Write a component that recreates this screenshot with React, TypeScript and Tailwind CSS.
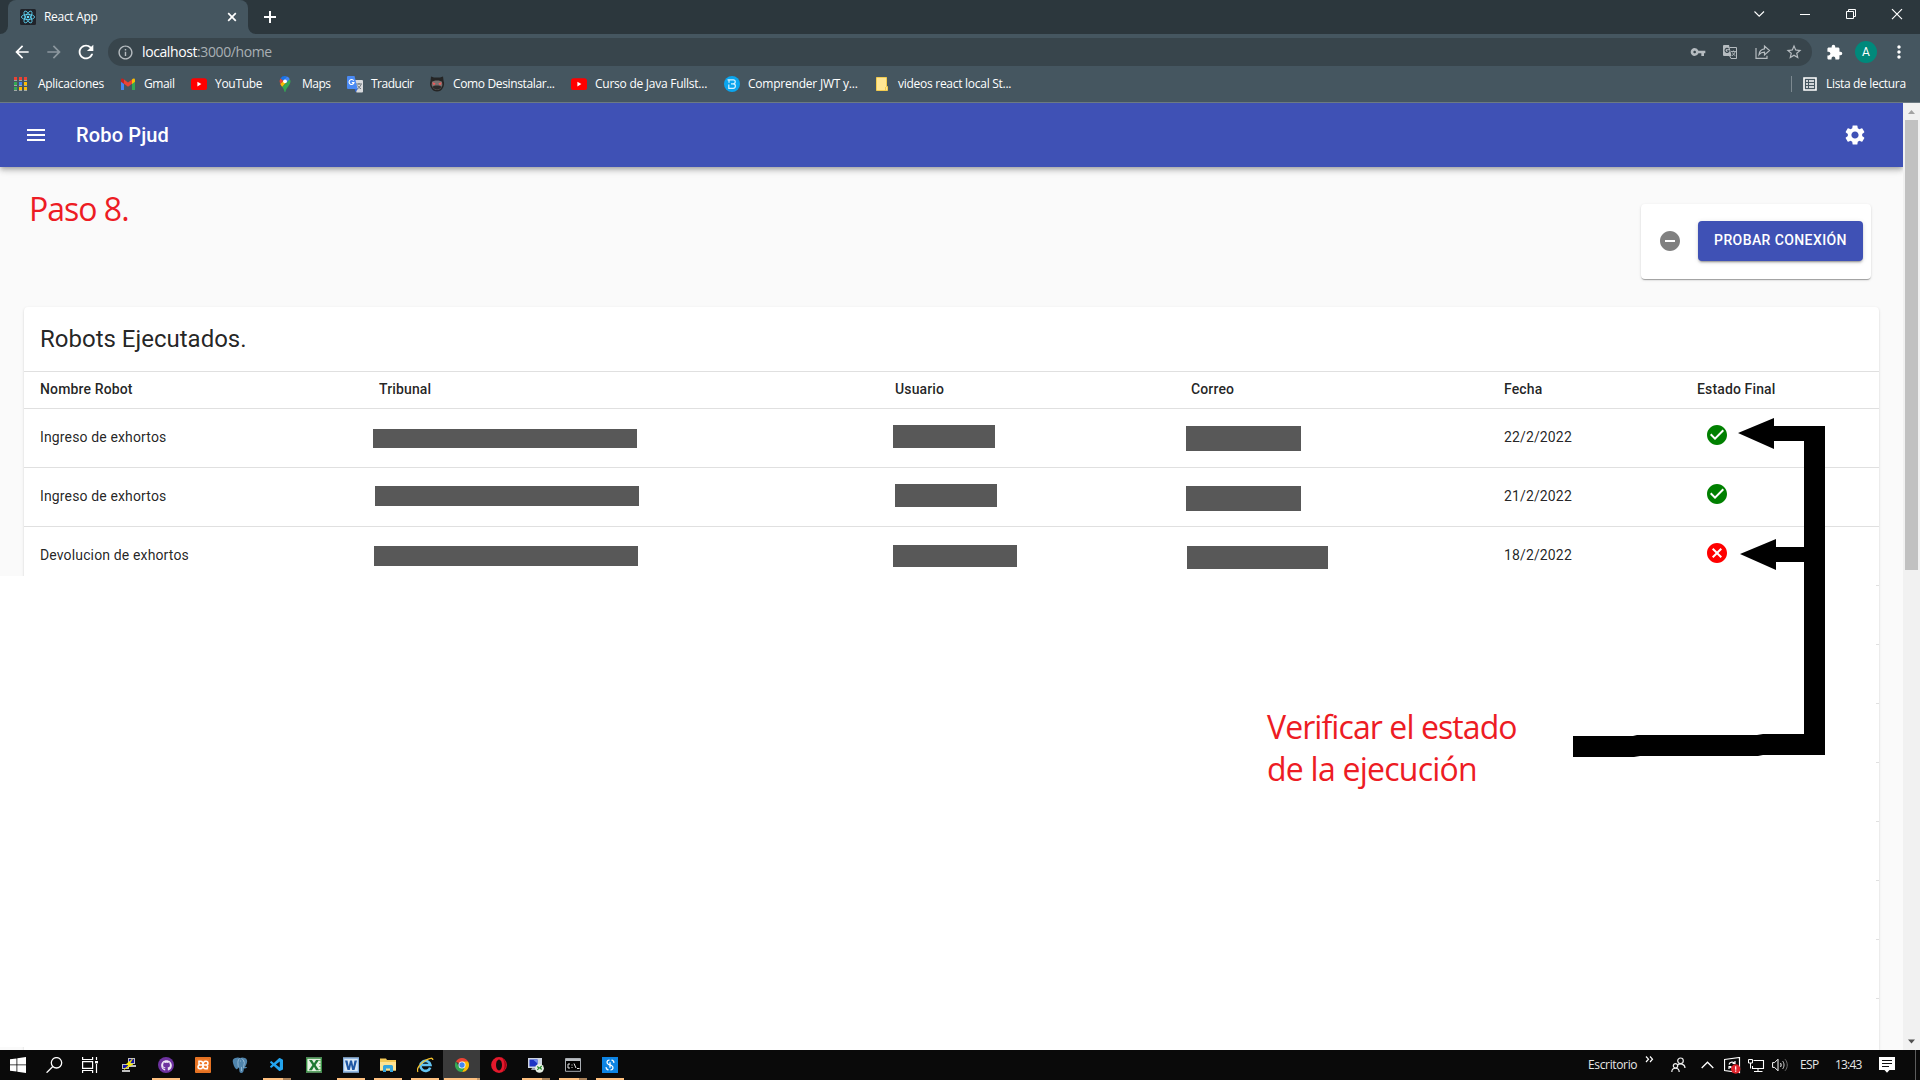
import React from "react";
import {
  MdMenu,
  MdSettings,
  MdCheckCircle,
  MdCancel,
  MdRemoveCircle,
  MdVpnKey,
  MdExtension,
  MdStarBorder,
  MdArrowBack,
  MdArrowForward,
  MdRefresh,
  MdMoreVert,
  MdInfoOutline,
} from "react-icons/md";
import { FaGithub } from "react-icons/fa";
import { VscVscode } from "react-icons/vsc";

/* ---------- bookmark icons ---------- */

const AppsIcon = () => (
  <svg width="16" height="16" viewBox="0 0 16 16">
    {[
      ["#ea4335", "#ea4335", "#ea4335"],
      ["#34a853", "#4285f4", "#fbbc04"],
      ["#34a853", "#fbbc04", "#fbbc04"],
    ].map((row, r) =>
      row.map((c, i) => <rect key={`${r}${i}`} x={i * 5} y={1 + r * 5} width="3" height="3" fill={c} />)
    )}
    <path d="M0 4.500h13M0 9.500h13M0 14.500h13" stroke="#a3aaa6" strokeWidth="1" strokeDasharray="3 2" />
  </svg>
);

const GmailIcon = () => (
  <svg width="16" height="16" viewBox="0 0 16 16">
    <path d="M1 4v10h3V7z" fill="#4285f4" />
    <path d="M12 7v7h3V4z" fill="#34a853" />
    <path d="M12 3.6V8l3-2.3V4c0-1.6-1.7-2-3-.4z" fill="#fbbc04" />
    <path d="M4 3.6v4.2l4 3 4-3V3.6l-4 3z" fill="#ea4335" />
    <path d="M1 4v1.7L4 8V3.6C2.7 2 1 2.4 1 4z" fill="#c5221f" />
  </svg>
);

const YouTubeIcon = () => (
  <svg width="16" height="16" viewBox="0 0 16 16">
    <rect x="0" y="2.2" width="16" height="11.8" rx="2.6" fill="#f00" />
    <path d="M6.4 5.8v4.6l4-2.3z" fill="#fff" />
  </svg>
);

const MapsIcon = () => (
  <svg width="16" height="16" viewBox="0 0 16 16">
    <g transform="translate(-1 0)">
      <path d="M8 0a5.5 5.5 0 0 0-4.6 2.4L6.5 5 10 .4A5 5 0 0 0 8 0z" fill="#1a73e8" />
      <path d="M3.4 2.4A5.4 5.4 0 0 0 3.2 8l3.2-3.1z" fill="#ea4335" />
      <path d="M10 .4 6.4 4.8l3.4 2.4 3-4A5 5 0 0 0 10 .4z" fill="#4285f4" />
      <path d="M3.2 8c.6 1.2 1.3 1.9 2 2.9l4.6-5.2L6.4 4.9z" fill="#fbbc04" />
      <path d="M12.8 3.2 5.2 10.9C6.6 12.8 7.200 14 7.500 15.400c.2.8.8.8 1 0 .9-3.600 4.800-6.200 5-9.800 0-.9-.3-1.700-.7-2.400z" fill="#34a853" />
      <circle cx="8" cy="5.3" r="1.900" fill="#fff" />
    </g>
  </svg>
);

const TranslateIcon = () => (
  <svg width="16" height="17" viewBox="0 0 16 17">
    <path d="M6 4h9a1 1 0 0 1 1 1v10.500a1 1 0 0 1-1 1H9.500z" fill="#d8dadd" />
    <path d="M9 8h6M12 7v1.500M14 8.500c-.7 2-2.200 3.500-4 4.500M10.500 9.500c.8 1.500 2 2.600 3.500 3.400" stroke="#6b747b" fill="none" />
    <path d="M1 0h6.500l3.200 13H1a1 1 0 0 1-1-1V1a1 1 0 0 1 1-1z" fill="#4a8af4" />
    <path d="M7.600 13h3.100l-2 3.300z" fill="#3367d6" />
    <path d="M6.700 4.700A2.500 2.500 0 1 0 7 6.600H4.800" stroke="#fff" fill="none" strokeWidth="1.100" />
  </svg>
);

const DemonIcon = () => (
  <svg width="16" height="16" viewBox="0 0 16 16">
    <path d="M2 .5l3 1h6l3-1 .6 4.500c.8 2 .7 4.500-.6 6.800C12.500 14.600 10.500 15.500 8 15.500s-4.500-.9-5.900-3.700C.8 9.500.7 7 1.500 5z" fill="#252525" />
    <path d="M3 6c1-2 9-2 10 0l.4 3c-1 3.600-3 5-5.400 5s-4.400-1.400-5.400-5z" fill="#77706e" />
    <path d="M3.500 6.200l3 1-.7 1.500H4zM12.500 6.200l-3 1 .7 1.500H12z" fill="#f05a5a" />
    <path d="M3.500 10.500c2-1.500 7-1.500 9 0-1.500 4.200-7.500 4.200-9 0z" fill="#2b2b2b" />
  </svg>
);

const BIcon = () => (
  <svg width="16" height="16" viewBox="0 0 16 16">
    <circle cx="8" cy="8" r="8" fill="#0ba5ee" />
    <path
      d="M3.500 3.800h5.700a2 2 0 0 1 0 4.100H7M9.200 7.900a2.200 2.200 0 0 1 0 4.400H4.800V8.600M5 3.800v3"
      stroke="#d6f2ff"
      strokeWidth="1.200"
      fill="none"
    />
  </svg>
);

const FolderIcon = () => (
  <svg width="16" height="16" viewBox="0 0 16 16">
    <path d="M2.500 1.500h10v9h1v4h-11z" fill="#ffe694" stroke="#f2cb4f" />
    <path d="M11.500 11v3.500" stroke="#f2cb4f" />
  </svg>
);

const bookmarks: { icon: React.ReactNode; label: string; box: string; text: string }[] = [
  { icon: <AppsIcon />, label: "Aplicaciones", box: "w-[106px]", text: "tracking-[-0.28px]" },
  { icon: <GmailIcon />, label: "Gmail", box: "w-[71px]", text: "tracking-[-0.4px]" },
  { icon: <YouTubeIcon />, label: "YouTube", box: "w-[87px]", text: "tracking-[-0.3px]" },
  { icon: <MapsIcon />, label: "Maps", box: "w-[69px]", text: "tracking-[-0.5px]" },
  { icon: <TranslateIcon />, label: "Traducir", box: "w-[82px]", text: "tracking-[-0.5px]" },
  { icon: <DemonIcon />, label: "Como Desinstalar...", box: "w-[142px]", text: "tracking-[-0.36px]" },
  { icon: <YouTubeIcon />, label: "Curso de Java Fullst...", box: "w-[153px]", text: "tracking-[-0.25px]" },
  { icon: <BIcon />, label: "Comprender JWT y...", box: "w-[150px]", text: "tracking-[-0.22px]" },
  { icon: <FolderIcon />, label: "videos react local St...", box: "w-[160px]", text: "tracking-[-0.27px]" },
];

/* ---------- browser chrome ---------- */

const ReactFavicon = () => (
  <svg width="16" height="16" viewBox="0 0 16 16" className="shrink-0">
    <rect width="16" height="16" rx="1.500" fill="#20232a" />
    <g fill="none" stroke="#61dafb" strokeWidth="0.800">
      <ellipse cx="8" cy="8" rx="6.600" ry="2.600" />
      <ellipse cx="8" cy="8" rx="6.600" ry="2.600" transform="rotate(60 8 8)" />
      <ellipse cx="8" cy="8" rx="6.600" ry="2.600" transform="rotate(120 8 8)" />
    </g>
    <circle cx="8" cy="8" r="1.300" fill="#61dafb" />
  </svg>
);

const TabStrip = () => (
  <div className="flex h-[34px] items-start bg-[#2c373d]">
    <svg width="8" height="34" className="shrink-0">
      <path d="M0 34h8v-8a8 8 0 0 1-8 8z" fill="#455660" />
    </svg>
    <div className="flex h-[34px] w-[240px] items-center rounded-t-lg bg-[#455660] pl-3 pr-[11px]">
      <ReactFavicon />
      <span className="ml-2 flex-1 text-[12px] leading-4 tracking-[-0.3px] text-white">React App</span>
      <svg width="10" height="10" viewBox="0 0 10 10">
        <path d="M1.200 1.200l7.600 7.600M8.800 1.200L1.200 8.800" stroke="#fff" strokeWidth="1.700" />
      </svg>
    </div>
    <svg width="8" height="34" className="shrink-0">
      <path d="M0 26v8h8a8 8 0 0 1-8-8z" fill="#455660" />
    </svg>
    <svg width="12" height="12" viewBox="0 0 12 12" className="ml-[8px] mt-[11px]">
      <path d="M6 0v12M0 6h12" stroke="#fff" strokeWidth="2" />
    </svg>
    <div className="flex-1" />
    <svg width="166" height="34" viewBox="0 0 166 34" fill="none" stroke="#fff">
      <path d="M0.500 12l4.700 4.700L10 12" transform="translate(0 -0.500)" strokeWidth="1.100" />
      <path d="M46 14.500h10" />
      <path d="M92.500 11.500h7v7h-7zM94.500 11.500v-2h7v7h-2" />
      <path d="M138 9.200l10 10M148 9.200l-10 10" strokeWidth="1.200" />
    </svg>
  </div>
);

const Toolbar = () => (
  <div className="flex h-9 items-center bg-[#455660]">
    <MdArrowBack className="ml-3 size-[20px] text-white" />
    <MdArrowForward className="ml-3 size-[20px] text-[#8c979e]" />
    <MdRefresh className="ml-[11px] size-[22px] text-white" />
    <div className="ml-[11px] flex h-7 w-[1704px] items-center rounded-full bg-[#38454c] pl-[9px] text-[#b6bcc0]">
      <MdInfoOutline className="size-[17px]" />
      <span className="ml-2 text-[14px] leading-5 tracking-[-0.4px] text-[#a9b0b4]">
        <span className="text-white">localhost</span>:3000/home
      </span>
      <div className="flex-1" />
      <MdVpnKey className="mr-[16px] size-[16px]" />
      <svg width="16" height="16" viewBox="0 0 16 16" className="mr-[17px]">
        <path d="M2 1h5l2.500 11H2a1 1 0 0 1-1-1V2a1 1 0 0 1 1-1z" fill="#b6bcc0" />
        <path d="M7.500 3.500h7v11H9l-1.500-2.800" stroke="#b6bcc0" fill="none" />
        <path d="M6.500 5A2 2 0 1 0 7 6.800H5" stroke="#38454c" fill="none" strokeWidth="1.100" />
        <path d="M9 7.500h5M11.500 6.500v1M13 8c-.4 1.500-1.500 2.800-3 3.700M10.400 8.500c.6 1.400 1.600 2.400 3 3.200" stroke="#b6bcc0" fill="none" strokeWidth="0.900" />
      </svg>
      <svg width="16" height="16" viewBox="0 0 16 16" fill="none" stroke="#b6bcc0" strokeWidth="1.200" className="mr-[14px]">
        <path d="M1 4v10.400h11v-2.600" />
        <path d="M9.500 4.800V2l5 4.500-5 4.400V8.200c-2.500 0-4.200.8-5.500 2.500.3-3 2-5.500 5.500-5.900z" />
      </svg>
      <MdStarBorder className="mr-[9px] size-[18px]" />
    </div>
    <MdExtension className="ml-[14px] size-[17px] text-white" />
    <div className="ml-[12px] flex size-[22px] items-center justify-center rounded-full bg-[#00897b] font-['Roboto',sans-serif] text-[12px] text-white">
      A
    </div>
    <MdMoreVert className="ml-[12px] size-[20px] text-white" />
  </div>
);

const BookmarksBar = () => (
  <div className="flex h-[33px] items-center border-b border-[#6c7a82] bg-[#455660] pb-1 pl-[14px] text-[12px] leading-4 text-white">
    {bookmarks.map((b) => (
      <div key={b.label} className={`flex shrink-0 items-center gap-2 whitespace-nowrap ${b.box}`}>
        {b.icon}
        <span className={b.text}>{b.label}</span>
      </div>
    ))}
    <div className="flex-1" />
    <div className="h-4 w-px bg-[#7d8990]" />
    <svg width="14" height="14" viewBox="0 0 14 14" className="ml-[11px]">
      <path d="M1 1h12v12H1z" fill="none" stroke="#fff" strokeWidth="1.600" />
      <path d="M3 4h2M6 4h5M3 7h2M6 7h5M3 10h2M6 10h5" stroke="#fff" strokeWidth="1.500" />
    </svg>
    <span className="ml-[9px] w-[94px] whitespace-nowrap tracking-[-0.33px]">Lista de lectura</span>
  </div>
);

/* ---------- page ---------- */

const GRID = "grid grid-cols-[339px_516px_296px_313px_193px_1fr]";

const rows = [
  {
    name: "Ingreso de exhortos",
    date: "22/2/2022",
    ok: true,
    court: "-ml-[6px] mt-[20px] h-[19px] w-[264px]",
    user: "-ml-[2px] mt-[16px] h-[23px] w-[102px]",
    mail: "-ml-[5px] mt-[17px] h-[25px] w-[115px]",
  },
  {
    name: "Ingreso de exhortos",
    date: "21/2/2022",
    ok: true,
    court: "-ml-[4px] mt-[18px] h-[20px] w-[264px]",
    user: "ml-0 mt-[16px] h-[23px] w-[102px]",
    mail: "-ml-[5px] mt-[18px] h-[25px] w-[115px]",
  },
  {
    name: "Devolucion de exhortos",
    date: "18/2/2022",
    ok: false,
    court: "-ml-[5px] mt-[19px] h-[20px] w-[264px]",
    user: "-ml-[2px] mt-[18px] h-[22px] w-[124px]",
    mail: "-ml-[4px] mt-[19px] h-[23px] w-[141px]",
  },
];

const ExecutedRobots = () => (
  <section className="ml-6 w-[1855px] rounded-t bg-white font-['Roboto',sans-serif] text-[14px] text-black/87 shadow-[0_2px_1px_-1px_rgba(0,0,0,0.2),0_1px_1px_0_rgba(0,0,0,0.14),0_1px_3px_0_rgba(0,0,0,0.12)]">
    <h2 className="flex h-16 items-center pl-4 text-[24px] leading-8">Robots Ejecutados.</h2>
    <div className={`${GRID} h-[38px] border-y border-[#e0e0e0] pl-4 font-medium leading-[34px] tracking-[0.14px]`}>
      <span>Nombre Robot</span>
      <span>Tribunal</span>
      <span>Usuario</span>
      <span>Correo</span>
      <span>Fecha</span>
      <span>Estado Final</span>
    </div>
    {rows.map((r) => (
      <div key={r.date} className={`${GRID} h-[59px] border-b border-[#e0e0e0] pl-4 leading-[56px] tracking-[0.14px]`}>
        <span>{r.name}</span>
        <div className={`bg-[#585858] ${r.court}`} />
        <div className={`bg-[#585858] ${r.user}`} />
        <div className={`bg-[#585858] ${r.mail}`} />
        <span>{r.date}</span>
        <span className="pl-[8px] pt-[14px]">
          {r.ok ? <MdCheckCircle className="size-6 text-[#008000]" /> : <MdCancel className="size-6 text-[#ff0000]" />}
        </span>
      </div>
    ))}
    {[0, 1, 2, 3, 4, 5, 6].map((i) => (
      <div key={i} className="h-[59px] border-b border-[#e0e0e0]" />
    ))}
    <div className="h-[51px]" />
  </section>
);

const Annotations = () => (
  <>
    <div className="absolute left-0 top-[473px] h-[471px] w-[1876px] bg-white" />
    <p className="absolute left-[29px] top-[85px] whitespace-nowrap text-[32px] leading-[42px] tracking-[-1px] text-[#ed1c24]">
      Paso 8.
    </p>
    <p className="absolute left-[1267px] top-[603px] whitespace-nowrap text-[32px] leading-[42px] tracking-[-0.92px] text-[#ed1c24]">
      Verificar el estado
      <br />
      <span className="tracking-[-0.76px]">de la ejecución</span>
    </p>
    <svg className="absolute left-[1560px] top-[307px]" width="280" height="360" viewBox="1560 410 280 360">
      <path d="M1738 433l36-15v8h51v329h-62l-5 1h-118l-6 1h-61v-21h60l4-1h120l6-1h41V562h-28v8l-36-16 36-15v8h28V441h-30v8z" fill="#000" />
    </svg>
  </>
);

const Scrollbar = () => (
  <div className="flex w-[17px] shrink-0 flex-col items-center bg-[#f1f1f1]">
    <svg width="17" height="17">
      <path d="M5 11h7L8.500 7z" fill="#a3a3a3" />
    </svg>
    <div className="h-[450px] w-[13px] bg-[#c1c1c1]" />
    <div className="flex-1" />
    <svg width="17" height="17">
      <path d="M5 6.500h7L8.500 10.500z" fill="#505050" />
    </svg>
  </div>
);

const Page = () => (
  <div className="flex h-[947px] overflow-hidden">
    <main className="relative flex w-[1903px] flex-col overflow-hidden bg-[#fafafa]">
      <header className="z-10 flex h-16 shrink-0 items-center bg-[#3f51b5] px-6 text-white shadow-[0_2px_4px_-1px_rgba(0,0,0,0.2),0_4px_5px_0_rgba(0,0,0,0.14),0_1px_10px_0_rgba(0,0,0,0.12)]">
        <MdMenu className="size-6" />
        <h1 className="ml-7 flex-1 font-['Roboto',sans-serif] text-[20px] font-medium tracking-[0.15px]">Robo Pjud</h1>
        <MdSettings className="mr-3 size-6" />
      </header>
      <div className="ml-[1641px] mt-[37px] flex h-[75px] w-[230px] shrink-0 items-center rounded bg-white pb-px pl-[17px] font-['Roboto',sans-serif] shadow-[0_2px_1px_-1px_rgba(0,0,0,0.2),0_1px_1px_0_rgba(0,0,0,0.14),0_1px_3px_0_rgba(0,0,0,0.12)]">
        <MdRemoveCircle className="size-6 text-[#808080]" />
        <button className="ml-4 h-10 w-[165px] rounded bg-[#3f51b5] pb-[1px] text-[14px] font-medium tracking-[0.4px] text-white shadow-[0_3px_1px_-2px_rgba(0,0,0,0.2),0_2px_2px_0_rgba(0,0,0,0.14),0_1px_5px_0_rgba(0,0,0,0.12)]">
          PROBAR CONEXIÓN
        </button>
      </div>
      <div className="h-7 shrink-0" />
      <ExecutedRobots />
      <Annotations />
    </main>
    <Scrollbar />
  </div>
);

/* ---------- taskbar ---------- */

const PuttyIcon = () => (
  <svg width="16" height="16" viewBox="0 0 16 16">
    <path d="M7 1h7v6H7zM7 8h8v2H7z" fill="#c0c0c0" />
    <path d="M8 2h5v4H8z" fill="#1212a8" />
    <path d="M1 7h7v5H1zM1 13h8v2H1z" fill="#c0c0c0" />
    <path d="M2 8h5v3H2z" fill="#1212a8" />
    <path d="M11.500 2L5 7.500h3.500L3 12.500l9-5.500H8.500z" fill="#ffee00" stroke="#ffee00" strokeWidth="0.600" />
  </svg>
);

const XamppIcon = () => (
  <svg width="16" height="16" viewBox="0 0 16 16">
    <rect width="16" height="16" rx="1" fill="#f07a28" />
    <rect x="1" y="1" width="14" height="14" rx="1" fill="none" stroke="#d96a1e" />
    <path
      d="M3.200 4.300h2.300c1.500 0 2.500 1.600 2.500 3.700 0-2.100 1-3.700 2.500-3.700h.6a1.800 1.800 0 0 1 0 3.700H8M12.800 11.700h-2.300C9 11.700 8 10.100 8 8c0 2.100-1 3.700-2.500 3.700h-.6a1.800 1.800 0 0 1 0-3.700H8M4 4.300v3.400M11.300 8c1.300 0 1.600 1.500.9 3.400"
      fill="none"
      stroke="#fff"
      strokeWidth="1.500"
    />
  </svg>
);

const PostgresIcon = () => (
  <svg width="16" height="16" viewBox="0 0 16 16">
    <path
      d="M4.500.8C6 .3 7 .5 8 1c1.500-.8 3.500-.7 5 0 2 1 2.600 2.600 2 4.600-.4 1.600-1.200 3.200-2 4.300.6.200 1.500 0 2.200 0-.4 1-2 1.600-3.300 1.500-.2 2-.3 4.300-2.300 4.500-1.800.1-2.200-1-2.300-3L7 10.500c-.8.800-2 2.200-3 1.500C2.200 10.700 1 6.600.700 4.300.5 2.300 2.500.8 4.500.8z"
      fill="#4f84ac"
    />
    <path d="M7.500 1.500C6 2.800 5.700 5 6 7c.2 1.200-.2 2.200.8 3.200M11.800 11C11 9 12.500 7.500 12.300 5.500 12 3.500 10.800 2 9.500 1.500M8 4h1M11 4h1M9.500 10v4" fill="none" stroke="#a9c7dc" strokeWidth="0.700" />
  </svg>
);

const ExcelIcon = () => (
  <svg width="16" height="16" viewBox="0 0 16 16">
    <path d="M0 .5h16v15H0z" fill="#e5f3e2" />
    <path d="M.7 1.200h14.600v13.600H.7z" fill="none" stroke="#2f8a3c" strokeWidth="1.300" />
    <path d="M3 3h3l2 3.300L10 3h3L9.600 8l3.600 5.200H10L8 9.800l-2 3.400H2.800L6.400 8z" fill="#1f7a33" />
    <path d="M13 3.500h2M13 6.500h2M13 9.500h2M13 12.500h2" stroke="#7dbb74" />
  </svg>
);

const WordIcon = () => (
  <svg width="16" height="16" viewBox="0 0 16 16">
    <path d="M0 .5h16v15H0z" fill="#d9e9f8" />
    <path d="M.6 1.100h14.800v13.800H.6z" fill="none" stroke="#7da9dc" strokeWidth="1.200" />
    <path d="M2 3.500h2.500l1.200 6L7 3.500h2l1.300 6 1.200-6H14L11.500 13H9.200L8 7.800 6.800 13H4.500z" fill="#1f57a5" />
  </svg>
);

const ExplorerIcon = () => (
  <svg width="16" height="16" viewBox="0 0 16 16">
    <path d="M0 1.500h6l1 1.500h9v10.500H0z" fill="#f5c956" />
    <path d="M1 5h15v8.500H0V5z" fill="#ffe391" />
    <path d="M3 15V9.500A1.500 1.500 0 0 1 4.500 8h7A1.500 1.500 0 0 1 13 9.500V15h-3v-3.500H6V15z" fill="#36a5dc" />
  </svg>
);

const IeIcon = () => (
  <svg width="17" height="16" viewBox="0 0 17 16">
    <path d="M13.200 10.600A5 5 0 1 1 13.400 8H5" fill="none" stroke="#63c3f1" strokeWidth="2.700" />
    <path d="M1 14.800c-2-2.500 2-8.500 8-11.800 4-2.200 7-2.400 6.800 0" fill="none" stroke="#f6c32c" strokeWidth="1.300" />
  </svg>
);

const ChromeIcon = () => (
  <svg width="14" height="14" viewBox="0 0 16 16">
    <path d="M8 8L1.070 4A8 8 0 0 1 14.930 4z" fill="#ea4335" />
    <path d="M8 4h6.930A8 8 0 0 1 8 16l3.460-6z" fill="#fbbc04" />
    <path d="M4.540 10L1.070 4A8 8 0 0 0 8 16l3.460-6z" fill="#34a853" />
    <circle cx="8" cy="8" r="4" fill="#fff" />
    <circle cx="8" cy="8" r="3.100" fill="#4285f4" />
  </svg>
);

const OperaIcon = () => (
  <svg width="16" height="16" viewBox="0 0 16 16">
    <circle cx="8" cy="8" r="7.900" fill="#e3192c" />
    <path d="M11 1a8 8 0 0 1 0 14c2-2 2.500-4.500 2.500-7S13 3 11 1z" fill="#a70014" />
    <ellipse cx="8" cy="8" rx="3" ry="5.400" fill="#0c0c0c" />
  </svg>
);

const RemoteIcon = () => (
  <svg width="16" height="16" viewBox="0 0 16 16">
    <path d="M0 1h14v10H0z" fill="#cfd6e2" />
    <path d="M1.500 2.500h8v7h-8z" fill="#1d33c4" />
    <path d="M5 2.500h4.500v4z" fill="#6f8cf0" />
    <path d="M4 11h5v2H3z" fill="#9aa2ae" />
    <circle cx="11.500" cy="11.300" r="4.400" fill="#e7efe4" />
    <path d="M9.300 9.500l1.800 1.600-1.800 1.800M13.700 9l-1.800 1.700 1.800 1.800" stroke="#2a8c2f" fill="none" strokeWidth="1.200" />
  </svg>
);

const CmdIcon = () => (
  <svg width="16" height="14" viewBox="0 0 16 14">
    <path d="M.5.500h15v12.800H.5z" fill="#000" stroke="#a9adb2" />
    <path d="M1 1h14v2H1z" fill="#b9bdc2" />
    <path d="M5 6H3v4h2M6.500 7h1M6.500 9.500h1M9 5.500l2 4.500M12 10.500h2.500" stroke="#e8e8e8" fill="none" />
  </svg>
);

const LinkIcon = () => (
  <svg width="16" height="16" viewBox="0 0 16 16">
    <rect width="16" height="16" fill="#0d84e3" />
    <path
      d="M7.500 3.200C4.800 3 4.200 6 6.200 7.200l1.300.8M9.500 3.200c1.600.2 2.500 1 2.300 2.600M8.500 12.800c2.700.2 3.300-2.800 1.300-4L8.500 8M6.500 12.800c-1.600-.2-2.500-1-2.300-2.600M8 5.200v5.600"
      stroke="#fff"
      strokeWidth="1.300"
      fill="none"
    />
  </svg>
);

type Task = { icon: React.ReactNode; open?: boolean; multi?: boolean; active?: boolean };

const tasks: Task[] = [
  { icon: <PuttyIcon /> },
  {
    icon: (
      <div className="flex size-4 items-center justify-center rounded-full bg-[#6e32a0]">
        <FaGithub className="size-[11px] text-[#eee6f5]" />
      </div>
    ),
    open: true,
  },
  { icon: <XamppIcon /> },
  { icon: <PostgresIcon /> },
  { icon: <VscVscode className="size-4 text-[#23a4ee]" />, open: true, multi: true },
  { icon: <ExcelIcon /> },
  { icon: <WordIcon />, open: true },
  { icon: <ExplorerIcon />, open: true },
  { icon: <IeIcon />, open: true },
  { icon: <ChromeIcon />, active: true },
  { icon: <OperaIcon /> },
  { icon: <RemoteIcon />, open: true, multi: true },
  { icon: <CmdIcon />, open: true, multi: true },
  { icon: <LinkIcon />, open: true },
];

const TaskButton = ({ icon, open, multi, active }: Task) => (
  <div className={active ? "flex h-[30px] w-[37px] flex-col bg-[#3b3b3b] pl-px" : "flex h-[30px] w-[37px] flex-col"}>
    <div className="flex h-7 items-center pl-[11px] pt-[2px]">{icon}</div>
    {active && (
      <div className="flex h-[2px]">
        <div className="w-[33px] bg-[#ffc180]" />
        <div className="flex-1 bg-[#c89a6b]" />
      </div>
    )}
    {open && (
      <div className="ml-[5px] flex h-[2px] w-7">
        <div className="flex-1 bg-[#ffc180]" />
        {multi && <div className="w-2 bg-[#a88058]" />}
      </div>
    )}
  </div>
);

const Tray = () => (
  <div className="flex h-[30px] w-[332px] items-center text-[12px] leading-4 text-[#e6e6e6]">
    <span className="w-[57px] tracking-[-0.35px]">Escritorio</span>
    <svg width="9" height="7" viewBox="0 0 9 7" className="mb-[11px]">
      <path d="M1 .5l2.500 2.700L1 6M5 .5l2.500 2.700L5 6" stroke="#fff" fill="none" strokeWidth="1.200" />
    </svg>
    <svg width="15" height="16" viewBox="0 0 15 16" className="ml-[17px]" fill="none" stroke="#f0f0f0" strokeWidth="1.200">
      <circle cx="9.500" cy="3.800" r="2.800" />
      <path d="M6.500 8c2-2 7.500-1.500 7.500 3" />
      <circle cx="4.500" cy="8.800" r="2.200" />
      <path d="M.8 15c0-5 7.400-5 7.400 0" />
    </svg>
    <svg width="13" height="8" viewBox="0 0 13 8" className="ml-[15px]">
      <path d="M.7 7l5.800-5.800L12.300 7" stroke="#fff" fill="none" strokeWidth="1.300" />
    </svg>
    <svg width="17" height="17" viewBox="0 0 17 17" className="ml-[10px]" fill="none" stroke="#fff">
      <path d="M.5 2.500l15-2v15l-15-2z" strokeWidth="1.200" />
      <path d="M5 7.500c1-3 4.500-3 5.500-1M11 4v2.500H8.500M10.500 9c-1 2.500-4 2.500-5 .5M5 12V9.500h2.500" strokeWidth="1.200" />
      <circle cx="11.700" cy="12" r="4.700" fill="#e0252d" stroke="none" />
      <path d="M11.700 9.200v3.500M11.700 13.500v1.200" strokeWidth="1.200" />
    </svg>
    <svg width="17" height="15" viewBox="0 0 17 15" className="ml-[7px]" fill="none" stroke="#fff">
      <path d="M5.500 2.500h10v8h-11V8M10 10.500v3M6 13.500h8.500" strokeWidth="1.100" />
      <path d="M.5 1.500h4v3.500h-4zM2.500 5v5.500" />
    </svg>
    <svg width="17" height="14" viewBox="0 0 17 14" className="ml-[7px]" fill="none" stroke="#fff">
      <path d="M.6 4.600h2L6 1.200v11.600L2.600 9.400h-2z" />
      <path d="M8.500 5c.8 1 .8 3 0 4" />
      <path d="M10.500 3c2 2 2 6 0 8" stroke="#c8c8c8" />
      <path d="M13 1.200c3 3.300 3 8.300 0 11.600" stroke="#6f6f6f" />
    </svg>
    <span className="ml-[11px] w-[35px] tracking-[-0.6px]">ESP</span>
    <span className="w-[44px] tracking-[-0.8px]">13:43</span>
    <svg width="16" height="16" viewBox="0 0 16 16">
      <path d="M0 0h16v13h-5.500L8 15.800 5.500 13H0z" fill="#fff" />
      <path d="M3 3.500h10M3 6.500h10M3 9.500h7" stroke="#111" strokeWidth="1.200" />
    </svg>
    <div className="ml-[20px] h-[30px] w-px bg-[#5c5c5c]" />
  </div>
);

const Taskbar = () => (
  <footer className="flex h-[30px] bg-[#0a0a0a]">
    <div className="flex w-9 items-center pl-[10px]">
      <svg width="16" height="16" viewBox="0 0 16 16">
        <path d="M0 2.300l6.500-.9v6.100H0zM7.300 1.300L16 0v7.500H7.300zM0 8.300h6.500v6.200L0 13.700zM7.300 8.300H16V16l-8.700-1.200z" fill="#fff" />
      </svg>
    </div>
    <div className="flex w-9 items-center pl-[10px]">
      <svg width="17" height="16" viewBox="0 0 17 16" fill="none" stroke="#fff" strokeWidth="1.300">
        <circle cx="10.500" cy="5.800" r="5.200" />
        <path d="M6.800 9.500L.6 15.700" />
      </svg>
    </div>
    <div className="flex w-9 items-center pl-[10px]">
      <svg width="16" height="16" viewBox="0 0 16 16" fill="none" stroke="#fff" strokeWidth="1.200">
        <path d="M.6 0v2.500h10V0M.6 16v-2.500h10V16M.6 4.700h10v6.600H.6zM14.500 0v3M14.500 7v9" />
        <path d="M13 5.200h3" strokeWidth="2.400" />
      </svg>
    </div>
    <div className="w-[2px]" />
    {tasks.map((t, i) => (
      <TaskButton key={i} {...t} />
    ))}
    <div className="flex-1" />
    <Tray />
  </footer>
);

export default function App() {
  return (
    <div className="h-[1080px] w-[1920px] overflow-hidden bg-white font-['Open_Sans','Noto_Sans',sans-serif]">
      <TabStrip />
      <Toolbar />
      <BookmarksBar />
      <Page />
      <Taskbar />
    </div>
  );
}
